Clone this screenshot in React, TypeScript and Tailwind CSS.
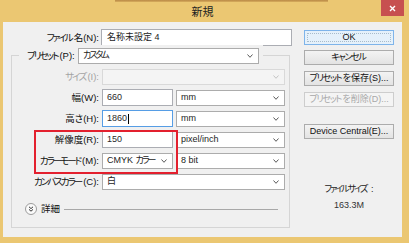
import React from 'react'

// カタカナだけ詰める (Meiryo UI のかなは幅が狭い)
function Jp({ t, tight }: { t: string; tight?: boolean }) {
  const parts = t.split(/([\u30A0-\u30FF]+)/)
  const cls = tight ? 'tracking-[-2px]' : 'tracking-[-1.3px]'
  return (
    <>
      {parts.map((p, i) =>
        i % 2 ? (
          <React.Fragment key={i}>
            <span className={cls}>{p.slice(0, -1)}</span>
            {p.slice(-1)}
          </React.Fragment>
        ) : (
          <React.Fragment key={i}>{p}</React.Fragment>
        )
      )}
    </>
  )
}

// ドロップダウンの矢印
function Chevron({ disabled }: { disabled?: boolean }) {
  return (
    <svg width="6" height="4" viewBox="0 0 6 4" className="shrink-0">
      <polyline
        points="0.5,0.5 3,3.3 5.5,0.5"
        fill="none"
        stroke={disabled ? '#c4c4c4' : '#5a5a5a'}
        strokeWidth="1"
      />
    </svg>
  )
}

function Select({ value, width, disabled }: { value: string; width: string; disabled?: boolean }) {
  return (
    <div
      className={`${width} h-[16px] flex items-center justify-between pl-[4px] pr-[5px] border ${
        disabled ? 'border-[#d9d9d9] bg-[#f4f4f4]' : 'border-[#acacac] bg-white'
      } text-[#1c1c1c]`}
    >
      <span className="leading-none whitespace-nowrap">
        <Jp t={value} tight />
      </span>
      <Chevron disabled={disabled} />
    </div>
  )
}

function TextInput({ value, focused }: { value: string; focused?: boolean }) {
  return (
    <div
      className={`w-[71px] h-[17px] flex items-center pl-[4px] bg-white border ${
        focused ? 'border-[#569de5]' : 'border-[#abadb3]'
      } text-[#2a2a2a]`}
    >
      <span className="leading-none">{value}</span>
      {focused && <span className="ml-px w-px h-[10px] bg-black" />}
    </div>
  )
}

function Row({ label, children, disabled }: { label: string; children: React.ReactNode; disabled?: boolean }) {
  return (
    <div className="h-[21px] flex items-center">
      <div
        className={`w-[87px] text-right leading-none text-[9.5px] whitespace-nowrap ${
          disabled ? 'text-[#a3a3a3]' : 'text-[#111]'
        }`}
      >
        <Jp t={label} tight />
      </div>
      <div className="ml-[3px] flex items-center">{children}</div>
    </div>
  )
}

function Button({ label, className = '', disabled }: { label: string; className?: string; disabled?: boolean }) {
  return (
    <div
      className={`w-[90px] h-[15px] flex items-center justify-center border leading-none whitespace-nowrap ${
        disabled
          ? 'border-[#cdcdcd] bg-[#f4f4f4] text-[#a8a8a8]'
          : 'border-[#acacac] bg-gradient-to-b from-[#f3f3f3] to-[#e3e3e3] text-[#111]'
      } ${className}`}
    >
      <Jp t={label} />
    </div>
  )
}

export default function App() {
  return (
    <div className="w-[409px] h-[243px] bg-[#ebc772] flex flex-col overflow-hidden relative [font-family:'Liberation_Sans','Noto_Sans_CJK_JP',sans-serif] [font-feature-settings:'palt'] text-[9px]">
      {/* 後ろのウィンドウの縁 */}
      <div className="absolute left-[115px] top-0 w-[213px] h-[2px] bg-gradient-to-b from-[#b98846] to-[#d8ae5e]" />

      {/* タイトルバー */}
      <div className="h-[22px] grid grid-cols-[1fr_auto_1fr] shrink-0">
        <div />
        <div className="pt-[7px] pr-[4px] text-[11px] leading-none text-[#222]">新規</div>
        <div className="flex justify-end pr-[5px]">
          <div className="w-[23px] h-[16px] bg-[#c75050] flex items-center justify-center">
            <svg width="7" height="7" viewBox="0 0 7 7">
              <path d="M1 1L6 6M6 1L1 6" stroke="white" strokeWidth="1.4" />
            </svg>
          </div>
        </div>
      </div>

      {/* 本体 */}
      <div className="ml-[3px] w-[399px] h-[215px] bg-[#f0f0f0] flex relative">
        <div className="w-[301px] flex flex-col">
          {/* ファイル名 */}
          <div className="mt-[7px] h-[17px] flex items-center">
            <div className="w-[96px] text-right leading-none text-[9.5px] text-[#111] whitespace-nowrap">
              <Jp t="ファイル名(N):" tight />
            </div>
            <div className="ml-[2px] w-[191px] h-[17px] flex items-center pl-[5px] bg-white border border-[#abadb3] text-[#1c1c1c]">
              <span className="leading-none">名称未設定 4</span>
            </div>
          </div>

          {/* プリセット グループ */}
          <div className="mt-[9px] ml-[8px] w-[279px] h-[173px] border border-[#d5d5d5] flex flex-col">
            <div className="-mt-[11px] h-[21px] flex items-center">
              <div className="ml-[7px] h-[21px] flex items-center bg-[#f0f0f0] pl-[8px] pr-[4px]">
                <span className="w-[46px] leading-none text-[9.5px] text-[#111] whitespace-nowrap">
                  <Jp t="プリセット(P):" tight />
                </span>
                <div className="ml-[5px]">
                  <Select value="カスタム" width="w-[181px]" />
                </div>
              </div>
            </div>

            <Row label="サイズ(I):" disabled>
              <Select value="" width="w-[183px]" disabled />
            </Row>
            <Row label="幅(W):">
              <TextInput value="660" />
              <div className="ml-[3px]">
                <Select value="mm" width="w-[109px]" />
              </div>
            </Row>
            <Row label="高さ(H):">
              <TextInput value="1860" focused />
              <div className="ml-[3px]">
                <Select value="mm" width="w-[109px]" />
              </div>
            </Row>
            <Row label="解像度(R):">
              <TextInput value="150" />
              <div className="ml-[3px]">
                <Select value="pixel/inch" width="w-[109px]" />
              </div>
            </Row>
            <Row label="カラーモード(M):">
              <Select value="CMYK カラー" width="w-[71px]" />
              <div className="ml-[3px]">
                <Select value="8 bit" width="w-[109px]" />
              </div>
            </Row>
            <Row label="カンバスカラー(C):">
              <Select value="白" width="w-[183px]" />
            </Row>

            {/* 詳細 */}
            <div className="mt-[11px] h-[12px] flex items-center">
              <svg width="12" height="12" viewBox="0 0 12 12" className="ml-[13px] shrink-0">
                <circle cx="6" cy="6" r="5.5" fill="#fafafa" stroke="#9c9c9c" />
                <path d="M4 3.8L6 5.6L8 3.8M4 6.4L6 8.2L8 6.4" fill="none" stroke="#333" strokeWidth="1" />
              </svg>
              <span className="ml-[4px] leading-none text-[9.5px] text-[#111]">詳細</span>
              <div className="ml-[4px] mr-[11px] flex-1 h-px bg-[#a8a8a8]" />
            </div>
          </div>
        </div>

        {/* ボタン */}
        <div className="w-[90px] flex flex-col items-center">
          <div className="mt-[8px] w-[90px] h-[15px] p-[2px] border border-[#7eb4ea] bg-[#e5f1fb]">
            <div className="w-full h-full flex items-center justify-center border border-dotted border-[#a9bccb] leading-none text-[#111]">
              OK
            </div>
          </div>
          <Button className="mt-[5px]" label="キャンセル" />
          <Button className="mt-[6px]" label="プリセットを保存(S)..." />
          <Button className="mt-[6px]" label="プリセットを削除(D)..." disabled />
          <Button className="mt-[17px]" label="Device Central(E)..." />
          <div className="mt-[46px] leading-none text-[#222] whitespace-nowrap">
            <Jp t="ファイルサイズ :" tight />
          </div>
          <div className="mt-[7px] leading-none text-[#333]">163.3M</div>
        </div>

        {/* 赤い囲み */}
        <div className="absolute left-[31px] top-[108px] w-[144px] h-[44px] border-2 border-[#e3202e]" />
      </div>
    </div>
  )
}
